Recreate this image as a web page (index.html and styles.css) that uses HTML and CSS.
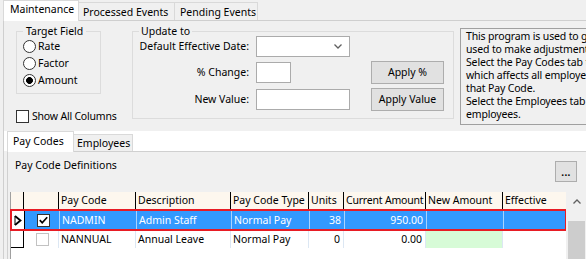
FILE: index.html
```html
<!DOCTYPE html>
<html>
<head>
<meta charset="utf-8">
<title>Maintenance</title>
<link rel="stylesheet" href="styles.css">
</head>
<body>
<div class="app">
  <div class="tabstrip">
    <div class="tab tab1 active">Maintenance</div>
    <div class="tab tab2">Processed Events</div>
    <div class="tab tab3">Pending Events</div>
  </div>
  <div class="page">
    <div class="top">
      <div class="leftcol">
        <fieldset class="group target">
          <legend>Target Field</legend>
          <div class="radio"><span class="rb"></span>Rate</div>
          <div class="radio"><span class="rb"></span>Factor</div>
          <div class="radio"><span class="rb on"></span>Amount</div>
        </fieldset>
        <div class="check"><span class="cb"></span>Show All Columns</div>
      </div>
      <fieldset class="group update">
        <legend>Update to</legend>
        <div class="form">
          <div class="lbl">Default Effective Date:</div>
          <div class="field combo"><svg class="chev" width="8" height="5" viewBox="0 0 8 5"><path d="M0.5 0.5 L4 4 L7.5 0.5" fill="none" stroke="#606060" stroke-width="1.3"/></svg></div>
          <div></div>
          <div class="lbl">% Change:</div>
          <div class="field short"></div>
          <div class="btn">Apply %</div>
          <div class="lbl">New Value:</div>
          <div class="field"></div>
          <div class="btn">Apply Value</div>
        </div>
      </fieldset>
      <div class="info">
        <div>This program is used to globally update Pay Code rates and amounts. It is</div>
        <div>used to make adjustments to multiple employees at once.</div>
        <div>Select the Pay Codes tab to make a change to the Pay Code definition</div>
        <div>which affects all employees that do not have an override amount for</div>
        <div>that Pay Code.</div>
        <div>Select the Employees tab to make changes to the amounts for individual</div>
        <div>employees.</div>
      </div>
    </div>

    <div class="subtabs">
      <div class="substrip">
        <div class="stab stab1 active">Pay Codes</div>
        <div class="stab stab2">Employees</div>
      </div>
      <div class="subpage">
        <div class="defhead">
          <div class="deftitle">Pay Code Definitions</div>
          <div class="dots">...</div>
        </div>
        <div class="grid">
          <div class="gbody">
            <div class="row head">
              <div class="c c0"></div>
              <div class="c c1"></div>
              <div class="c c2">Pay Code</div>
              <div class="c c3">Description</div>
              <div class="c c4">Pay Code Type</div>
              <div class="c c5">Units</div>
              <div class="c c6">Current Amount</div>
              <div class="c c7">New Amount</div>
              <div class="c c8">Effective</div>
            </div>
            <div class="row sel">
              <div class="c c0"><svg width="8" height="11" viewBox="0 0 8 11"><path d="M1 1 L6.5 5.5 L1 10" fill="none" stroke="#000" stroke-width="1.8" stroke-linejoin="miter"/><path d="M1 1 V10" stroke="#000" stroke-width="1"/></svg></div>
              <div class="c c1"><span class="gcb checked"><svg width="11" height="11" viewBox="0 0 11 11"><path d="M1.8 5.2 L4.2 7.8 L9.2 2.2" fill="none" stroke="#000" stroke-width="1.7"/></svg></span></div>
              <div class="c c2">NADMIN</div>
              <div class="c c3">Admin Staff</div>
              <div class="c c4">Normal Pay</div>
              <div class="c c5 num">38</div>
              <div class="c c6 num">950.00</div>
              <div class="c c7"></div>
              <div class="c c8"></div>
            </div>
            <div class="row">
              <div class="c c0 last"></div>
              <div class="c c1"><span class="gcb dis"></span></div>
              <div class="c c2">NANNUAL</div>
              <div class="c c3">Annual Leave</div>
              <div class="c c4">Normal Pay</div>
              <div class="c c5 num">0</div>
              <div class="c c6 num">0.00</div>
              <div class="c c7 green"></div>
              <div class="c c8"></div>
            </div>
          </div>
          <div class="vscroll">
            <div class="sbtn"><svg width="8" height="5" viewBox="0 0 8 5"><path d="M0.5 4.5 L4 1 L7.5 4.5" fill="none" stroke="#606060" stroke-width="1.3"/></svg></div>
            <div class="thumb"></div>
          </div>
        </div>
      </div>
    </div>
  </div>
</div>
</body>
</html>
```
FILE: styles.css
```css
* { box-sizing: border-box; }
html, body { margin: 0; padding: 0; }
body {
  width: 586px;
  height: 259px;
  overflow: hidden;
  background: #f0f0f0;
  font-family: "Noto Sans", "Open Sans", "DejaVu Sans", sans-serif;
  font-size: 10.5px;
  line-height: 13px;
  color: #000;
}
.app { width: 680px; }

/* outer tabs */
.tabstrip {
  display: flex;
  align-items: flex-end;
  height: 21px;
  padding-left: 3px;
  position: relative;
  z-index: 2;
}
.tab {
  height: 18px;
  margin-bottom: 1px;
  border: 1px solid #d9d9d9;
  border-bottom: none;
  background: #f0f0f0;
  padding-top: 3px;
  white-space: nowrap;
}
.tab.active {
  height: 21px;
  margin-bottom: 0;
  background: #ffffff;
  padding-top: 2px;
}
.tab1 { width: 76px; padding-left: 6px; }
.tab2 { width: 97px; padding-left: 4px; margin-left: -1px; }
.tab3 { width: 84px; padding-left: 5px; margin-left: -1px; }

.page {
  position: relative;
  z-index: 1;
  margin-left: 3px;
  margin-top: -1px;
  border-top: 1px solid #cfcfcf;
  border-left: 1px solid #cfcfcf;
  height: 260px;
}

.top { display: flex; align-items: flex-start; }
.leftcol { flex: 0 0 85px; width: 85px; margin-left: 12px; margin-top: 4px; }

.group {
  margin: 0;
  min-width: 0;
  border: 1px solid #dcdcdc;
}
.group legend {
  padding: 0 3px;
  line-height: 13px;
  white-space: nowrap;
}
.target { width: 85px; padding: 0 6px 4px 6px; }

.radio { display: flex; align-items: center; height: 17px; white-space: nowrap; }
.rb {
  width: 13px; height: 13px;
  border: 1px solid #333;
  border-radius: 50%;
  background: #fff;
  margin-right: 2px;
  flex: 0 0 13px;
}
.rb.on { background: radial-gradient(circle, #000 0 3.1px, #fff 3.7px); }

.check { display: flex; align-items: center; height: 17px; margin-top: 14px; white-space: nowrap; letter-spacing: -0.2px; }
.cb {
  width: 13px; height: 13px;
  border: 1px solid #333;
  background: #fff;
  margin-right: 3px;
  flex: 0 0 13px;
}

.update { flex: 0 0 322px; width: 322px; margin-top: 4px; margin-left: 31px; padding: 0 6px 7px 6px; }
.update legend { padding: 0 2px; }
.form {
  margin-top: -2px;
  display: grid;
  grid-template-columns: 117px 94px 94px;
  grid-template-rows: 21px 23px 23px;
  row-gap: 4px;
  align-items: center;
}
.lbl { text-align: right; padding-right: 7px; white-space: nowrap; }
.field {
  height: 21px;
  width: 94px;
  border: 1px solid #ababab;
  background: #fff;
}
.field.short { width: 35px; }
.combo { display: flex; align-items: center; justify-content: flex-end; padding-right: 7px; }
.btn {
  height: 23px;
  width: 73px;
  margin-left: 21px;
  border: 1px solid #adadad;
  background: #e1e1e1;
  display: flex;
  align-items: center;
  justify-content: center;
  white-space: nowrap;
}

.info {
  flex: 0 0 200px;
  width: 200px;
  height: 97px;
  margin-left: 6px;
  margin-top: 7px;
  border: 1px solid #a0a0a0;
  padding: 1px 0 0 5px;
  overflow: hidden;
  white-space: nowrap;
  letter-spacing: -0.15px;
}

/* inner tabs */
.subtabs { margin-top: 6px; }
.substrip {
  height: 20px;
  background: #fff;
  display: flex;
  align-items: flex-end;
  padding-left: 3px;
  position: relative;
  z-index: 2;
}
.stab {
  height: 17px;
  border: 1px solid #d9d9d9;
  border-bottom: none;
  background: #f0f0f0;
  padding-top: 2px;
  white-space: nowrap;
}
.stab.active {
  height: 21px;
  margin-bottom: -1px;
  background: #fff;
  padding-top: 3px;
}
.stab1 { width: 67px; padding-left: 5px; }
.stab2 { width: 60px; padding-left: 3px; margin-left: -1px; }

.subpage {
  margin-left: 3px;
  border-top: 1px solid #d0d0d0;
  border-left: 1px solid #d0d0d0;
  padding-left: 2px;
  position: relative;
  z-index: 1;
}
.defhead {
  width: 576px;
  height: 40px;
  display: flex;
  justify-content: space-between;
  align-items: flex-start;
}
.deftitle { padding-left: 5px; padding-top: 7px; }
.dots {
  width: 22px; height: 21px;
  margin-top: 9px;
  margin-right: 9px;
  border: 1px solid #adadad;
  background: #e1e1e1;
  display: flex;
  align-items: flex-start;
  justify-content: center;
  padding-top: 4px;
  font-weight: bold;
  font-size: 10px;
  letter-spacing: 0.3px;
}

/* grid */
.grid {
  width: 576px;
  height: 80px;
  display: flex;
  background: #fff;
}
.gbody { width: 556px; border-left: 1px solid #a0a0a0; }
.row { display: flex; height: 17px; align-items: stretch; }
.c {
  flex: 0 0 auto;
  white-space: nowrap;
  overflow: hidden;
  padding-left: 2px;
  display: flex;
  align-items: center;
  border-left: 1px solid #dce7f3;
}
.c0 { width: 12px; border-left: none; padding-left: 2px; }
.c1 { width: 35px; border-left: 1px solid #000; padding-left: 12px; }
.c2 { width: 77px; }
.c3 { width: 95px; }
.c4 { width: 78px; }
.c5 { width: 35px; }
.c6 { width: 82px; }
.c7 { width: 77px; }
.c8 { width: 64px; }
.num { justify-content: flex-end; padding-right: 3px; }

.head { background: #fdf7ee; }
.head .c { border-left: 1px solid #000; }
.head .c0 { border-left: none; }
.head .c6 { letter-spacing: -0.2px; }

.sel {
  height: 22px;
  background: #3399ff;
  color: #fff;
  outline: 2px solid #e81c24;
  outline-offset: -2px;
  width: 557px;
  margin-left: -1px;
  padding-left: 1px;
}
.sel .c { border-left-color: #a9d3ff; }
.sel .c0 { background: #fff; padding-left: 2px; width: 12px; border-left: none; margin-left: 1px; }
.sel .c1 { border-left: 1px solid #000; }
.sel .c8 { width: 63px; }

.c0.last { border-bottom: 1px solid #000; }
.green { background: #d7fbd7; }

.gcb {
  width: 13px; height: 13px;
  border: 1px solid #333;
  background: #fff;
  display: flex;
  align-items: center;
  justify-content: center;
}
.gcb.dis { border-color: #c2c2c2; }

.vscroll {
  width: 20px;
  background: #f0f0f0;
  display: flex;
  flex-direction: column;
}
.sbtn { height: 32px; display: flex; justify-content: center; align-items: center; padding-bottom: 10px; padding-left: 1px; }
.thumb { margin: 0 1px 0 2px; height: 60px; background: #cdcdcd; }
```
